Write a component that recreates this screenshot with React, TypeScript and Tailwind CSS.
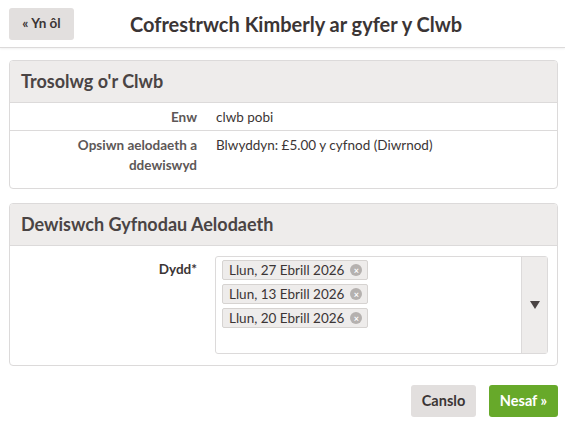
const dates = ['Llun, 27 Ebrill 2026', 'Llun, 13 Ebrill 2026', 'Llun, 20 Ebrill 2026'];

export default function App() {
  return (
    <div className="min-h-[426px] bg-white text-[#3b3535]" style={{ fontFamily: 'Lato, "Open Sans", sans-serif' }}>
      <header className="flex h-[48px] items-center border-b border-[#dcdada] px-[9px] shadow-[0_1px_2px_rgba(0,0,0,0.06)]">
        <button className="flex h-[32px] w-[65px] items-center justify-center rounded-[3px] bg-[#e2dfde] text-[13.5px] font-bold text-[#3b3535]">
          « Yn ôl
        </button>
        <h1 className="ml-[56px] text-[20px] font-bold leading-none text-[#3b3535]">Cofrestrwch Kimberly ar gyfer y Clwb</h1>
      </header>

      <main className="pl-[9px] pr-[7px] pt-[12px]">
        <section className="overflow-hidden rounded-[4px] border border-[#dcdada]">
          <h2 className="flex h-[42px] items-center border-b border-[#dcdada] bg-[#eeeceb] px-[11px] text-[18px] font-bold text-[#4a4444]">
            Trosolwg o'r Clwb
          </h2>
          <div className="flex border-b border-[#dcdada] pt-[4px] pb-[3px] text-[13.5px] leading-[20px]">
            <div className="w-[187px] text-right font-bold text-[#5d5757]">Enw</div>
            <div className="ml-[19px]">clwb pobi</div>
          </div>
          <div className="flex pt-[4px] pb-[13px] text-[13.5px] leading-[20px]">
            <div className="w-[187px] pl-[60px] text-right font-bold text-[#5d5757]">Opsiwn aelodaeth a ddewiswyd</div>
            <div className="ml-[19px]">Blwyddyn: £5.00 y cyfnod (Diwrnod)</div>
          </div>
        </section>

        <section className="mt-[14px] overflow-hidden rounded-[4px] border border-[#dcdada]">
          <h2 className="flex h-[42px] items-center border-b border-[#dcdada] bg-[#eeeceb] px-[11px] text-[18px] font-bold text-[#4a4444]">
            Dewiswch Gyfnodau Aelodaeth
          </h2>
          <div className="flex pt-[10px] pb-[11px] text-[13.5px]">
            <div className="w-[187px] pt-[3px] text-right font-bold text-[#3b3535]">Dydd*</div>
            <div className="ml-[18px] flex h-[98px] w-[333px] rounded-[3px] border border-[#dcdada]">
              <div className="flex flex-1 flex-col items-start gap-[4px] px-[6px] pt-[3px]">
                {dates.map((d) => (
                  <span
                    key={d}
                    className="flex h-[20px] items-center gap-[6px] rounded-[2px] border border-[#d6d3d1] bg-[#eeeceb] pl-[6px] pr-[5px] text-[13.5px] text-[#3b3535]"
                  >
                    {d}
                    <span className="flex h-[12px] w-[12px] items-center justify-center rounded-full bg-[#b5b1af] text-[9px] font-bold leading-none text-white">
                      ×
                    </span>
                  </span>
                ))}
              </div>
              <div className="flex w-[26px] items-center justify-center border-l border-[#dcdada] bg-[#eeeceb]">
                <svg width="10" height="8" viewBox="0 0 10 8">
                  <path d="M0 0h10L5 8z" fill="#4a4444" />
                </svg>
              </div>
            </div>
          </div>
        </section>

        <div className="mt-[19px] flex justify-end gap-[13px]">
          <button className="h-[32px] w-[65px] rounded-[3px] bg-[#e2dfde] text-[14.5px] font-bold text-[#3b3535]">Canslo</button>
          <button className="h-[32px] w-[69px] rounded-[3px] bg-[#67a92a] text-[14.5px] font-bold text-white">Nesaf »</button>
        </div>
      </main>
    </div>
  );
}
